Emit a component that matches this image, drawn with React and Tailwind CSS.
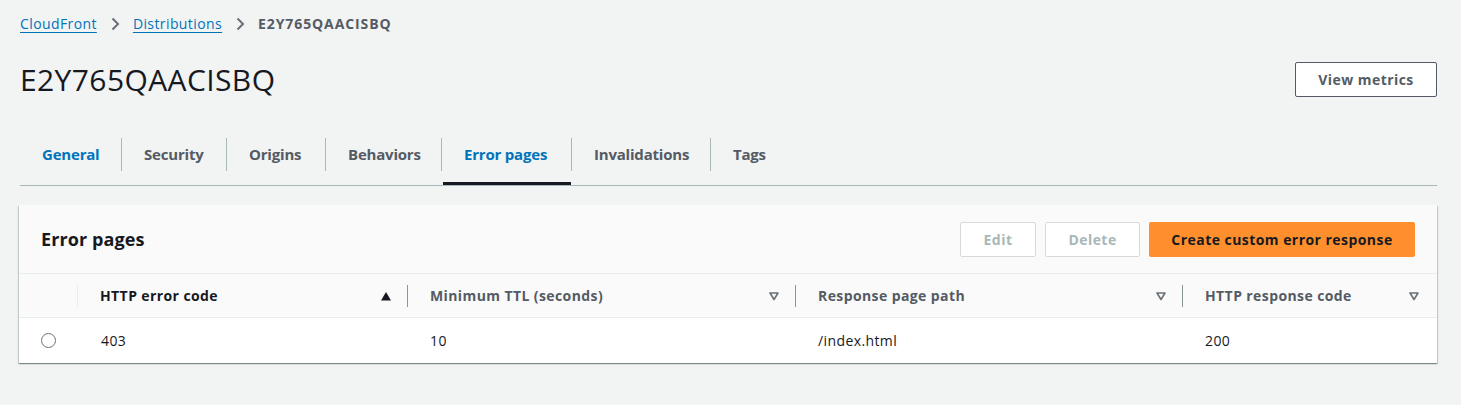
import React from "react";

const font = { fontFamily: "'Open Sans', Roboto, Arial, sans-serif" };

const Chevron = () => (
  <svg width="16" height="16" viewBox="0 0 16 16" className="mx-[10px]">
    <path d="M5.5 2.5 11 8l-5.5 5.5" fill="none" stroke="#687078" strokeWidth="2" />
  </svg>
);

const SortIcon = ({ active }) =>
  active ? (
    <svg width="12" height="12" viewBox="0 0 12 12">
      <path d="M1 10.5 6 2l5 8.5z" fill="#16191f" />
    </svg>
  ) : (
    <svg width="12" height="12" viewBox="0 0 12 12">
      <path d="M2 3h8L6 9.5z" fill="none" stroke="#687078" strokeWidth="1.6" strokeLinejoin="round" />
    </svg>
  );

const tabs = [
  { label: "General", w: "w-[101px]", blue: true },
  { label: "Security", w: "w-[105px]" },
  { label: "Origins", w: "w-[99px]" },
  { label: "Behaviors", w: "w-[116px]" },
  { label: "Error pages", w: "w-[130px]", blue: true, active: true },
  { label: "Invalidations", w: "w-[139px]" },
  { label: "Tags", w: "w-[80px]" },
];

const columns = [
  { label: "HTTP error code", w: "w-[330px]", active: true },
  { label: "Minimum TTL (seconds)", w: "w-[388px]" },
  { label: "Response page path", w: "w-[387px]" },
  { label: "HTTP response code", w: "flex-1", last: true },
];

export default function App() {
  return (
    <div className="min-h-[405px] bg-[#f2f3f3] pl-5 pr-[24px] pt-[14px]" style={font}>
      {/* breadcrumb */}
      <div className="flex items-center text-[14px] leading-5 h-5">
        <a className="text-[#0073bb] underline underline-offset-[3px] decoration-1 tracking-[0.4px]">CloudFront</a>
        <Chevron />
        <a className="text-[#0073bb] underline underline-offset-[3px] decoration-1 tracking-[0.4px]">Distributions</a>
        <Chevron />
        <span className="text-[#545b64] font-bold tracking-[0.9px]">E2Y765QAACISBQ</span>
      </div>

      {/* title row */}
      <div className="flex items-center justify-between mt-[28px] h-[34px]">
        <h1 className="text-[30px] leading-[34px] text-[#16191f] font-normal tracking-[0.4px] pt-[2px]">E2Y765QAACISBQ</h1>
        <button className="h-[35px] w-[142px] border border-[#545b64] rounded-[2px] bg-white text-[14px] font-bold text-[#545b64] tracking-[0.45px]">
          View metrics
        </button>
      </div>

      {/* tabs */}
      <div className="mt-[41px] flex border-b border-[#aab7b8] h-[49px]">
        {tabs.map((t, i) => (
          <div key={t.label} className={`relative flex ${t.w}`}>
            {i > 0 && <div className="w-px bg-[#aab7b8] mt-px h-[33px]" />}
            <div
              className={`h-[35px] flex items-center pl-[22px] text-[15px] font-bold tracking-[-0.2px] ${
                t.blue ? "text-[#0073bb]" : "text-[#545b64]"
              }`}
            >
              {t.label}
            </div>
            {t.active && <div className="absolute left-[2px] right-0 bottom-0 h-[3px] bg-[#16191f]" />}
          </div>
        ))}
      </div>

      {/* panel */}
      <div className="mt-[19px] -ml-px bg-white shadow-[0_1px_1px_0_rgba(0,28,36,0.3),1px_1px_1px_0_rgba(0,28,36,0.15),-1px_1px_1px_0_rgba(0,28,36,0.15)]">
        <div className="h-[69px] bg-[#fafafa] flex items-center justify-between pl-[22px] pr-[22px] border-b border-[#eaeded]">
          <h2 className="text-[18px] font-bold text-[#16191f] leading-[22px] tracking-[0.1px]">Error pages</h2>
          <div className="flex items-center gap-[9px] tracking-[0.45px]">
            <button className="h-[35px] w-[76px] border border-[#d5dbdb] rounded-[2px] bg-white text-[14px] font-bold text-[#aab7b8]">
              Edit
            </button>
            <button className="h-[35px] w-[95px] border border-[#d5dbdb] rounded-[2px] bg-white text-[14px] font-bold text-[#aab7b8]">
              Delete
            </button>
            <button className="h-[35px] w-[266px] rounded-[2px] bg-[#ff8f2c] text-[14px] font-bold text-[#16191f]">
              Create custom error response
            </button>
          </div>
        </div>

        {/* table header */}
        <div className="flex h-[44px] bg-[#fafafa] border-b border-[#eaeded] text-[14px] font-bold text-[#545b64] tracking-[0.4px]">
          <div className="w-[59px] flex items-center justify-end">
            <div className="w-px h-[22px] bg-[#eaeded]" />
          </div>
          {columns.map((c) => (
            <div key={c.label} className={`${c.w} flex items-center`}>
              <div className={`flex-1 flex items-center justify-between pl-[22px] ${c.last ? "pr-[17px]" : "pr-[15px]"}`}>
                <span className={c.active ? "text-[#16191f]" : ""}>{c.label}</span>
                <SortIcon active={c.active} />
              </div>
              {!c.last && <div className="w-px h-[22px] bg-[#879596]" />}
            </div>
          ))}
        </div>

        {/* row */}
        <div className="flex h-[45px] items-center text-[14px] text-[#16191f] tracking-[0.4px]">
          <div className="w-[59px] flex justify-center">
            <div className="w-[15px] h-[15px] rounded-full border border-[#687078] bg-white" />
          </div>
          <div className="w-[330px] pl-[23px]">403</div>
          <div className="w-[388px] pl-[22px]">10</div>
          <div className="w-[387px] pl-[22px]">/index.html</div>
          <div className="flex-1 pl-[22px]">200</div>
        </div>
      </div>
    </div>
  );
}
